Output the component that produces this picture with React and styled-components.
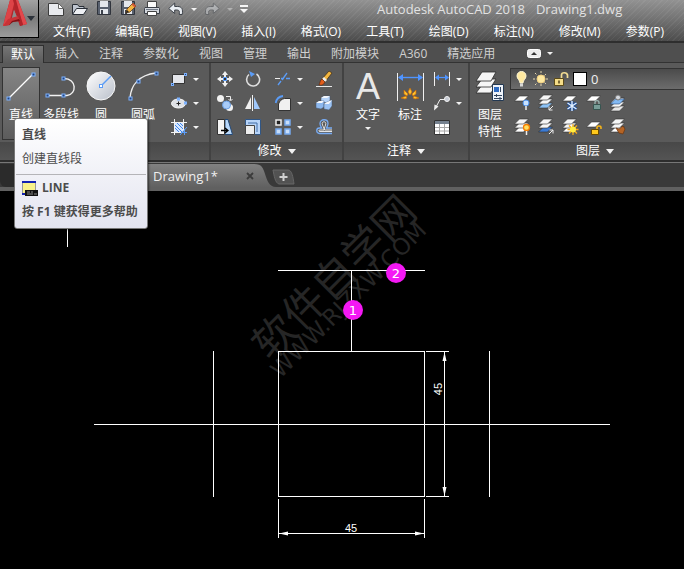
import React from 'react';
import styled, { createGlobalStyle, css } from 'styled-components';

const GlobalStyle = createGlobalStyle`
	* {
		box-sizing: border-box;
	}
	body {
		margin: 0;
		background: #000;
		font-family: "Open Sans", "Noto Sans CJK SC", sans-serif;
		font-size: 12px;
		line-height: 16px;
		color: #f0f0f0;
	}
	button, select {
		font: inherit;
		color: inherit;
		border: 0;
		margin: 0;
		padding: 0;
		background: none;
	}
`;

/* ---------- layout ---------- */

const Window = styled.div`
	display: flex;
	flex-direction: column;
	min-height: 100vh;
	overflow-x: hidden;
`;

const Header = styled.header`
	display: flex;
	height: 43px;
	border-bottom: 2px solid #2e2e2e;
	background:
		repeating-linear-gradient(135deg, rgba(255,255,255,0.05) 0 1px, transparent 1px 4px),
		linear-gradient(#929292, #747474 45%, #4c4c4c);
`;

const LogoButton = styled.button`
	display: flex;
	align-items: center;
	width: 39px;
	height: 38px;
	flex: none;
	padding-left: 3px;
	border: solid #000;
	border-width: 0 1px 1px 0;
	background: linear-gradient(#a2a2a2, #7c7c7c 50%, #9c9c9c);
`;

const HeaderRows = styled.div`
	flex: 1;
	min-width: 0;
	white-space: nowrap;
	overflow: hidden;
`;

const QuickBar = styled.div`
	display: flex;
	align-items: center;
	height: 18px;
	padding-left: 5px;
`;

const QuickButton = styled.button`
	display: flex;
	align-items: center;
	justify-content: center;
	flex: none;
	width: ${props => props.$width || 24}px;
	height: 18px;
	opacity: ${props => (props.disabled ? 0.4 : 1)};
`;

const Title = styled.h1`
	display: flex;
	gap: 11px;
	margin: 0 0 0 125px;
	font-size: 13px;
	font-weight: 400;
	color: #e2e2e2;
`;

const Menu = styled.nav`
	display: flex;
	gap: 25px;
	padding: 6px 0 0 14px;
`;

const MenuLink = styled.a`
	color: #fff;
	text-decoration: none;
`;

const Tabs = styled.div`
	display: flex;
	align-items: stretch;
	height: 20px;
	padding: 2px 0 0 2px;
	white-space: nowrap;
	background: #4f4f4f;
	border-bottom: 1px solid #333;
`;

const Tab = styled.button`
	flex: none;
	padding: 0 10px;
	color: #cfcfcf;
	${props => props.$active && css`
		height: 18px;
		padding: 0 8px;
		margin-right: 1px;
		color: #fff;
		border: 1px solid #2f2f2f;
		border-bottom: 0;
		background: linear-gradient(#757575, #5b5b5b);
	`}
`;

const MinimizeButton = styled.button`
	display: flex;
	align-items: center;
	gap: 6px;
	margin-left: 22px;
`;

const Ribbon = styled.div`
	display: flex;
	height: 99px;
	background: #5a5a5a;
	border-bottom: 2px solid #2d2d2d;
`;

const Panel = styled.section`
	display: flex;
	flex-direction: column;
	flex: ${props => (props.$width ? `0 0 ${props.$width}px` : '1 1 0')};
	min-width: 0;
	border-right: ${props => (props.$clip ? 0 : '2px solid #424242')};
	overflow: ${props => (props.$clip ? 'hidden' : 'visible')};
`;

const PanelBody = styled.div`
	display: flex;
	height: 79px;
	min-width: ${props => props.$minWidth || 0}px;
	padding: 4px 0 0 ${props => props.$left || 0}px;
`;

const PanelTitle = styled.button`
	display: flex;
	align-items: center;
	justify-content: center;
	gap: 6px;
	height: 18px;
	min-width: ${props => props.$minWidth || 0}px;
	color: #fff;
	background: linear-gradient(#484848, #545454);
`;

const BigTool = styled.button`
	display: flex;
	flex-direction: column;
	align-items: center;
	flex: none;
	width: ${props => props.$width}px;
	height: 73px;
	padding-top: 2px;
	color: #fff;
	border: 1px solid transparent;
	${props => props.$active && css`
		border-color: #333;
		background: linear-gradient(#858585, #5c5c5c);
	`}
`;

const BigLabel = styled.span`
	margin: 4px 0;
	line-height: 17px;
	white-space: nowrap;
`;

const ToolSlot = styled.div`
	position: relative;
`;

const ToolGrid = styled.div`
	display: grid;
	grid-template-columns: ${props => props.$columns};
	grid-auto-rows: 24px;
	align-content: start;
	padding-left: ${props => props.$left || 0}px;
`;

const SmallTool = styled.button`
	display: flex;
	align-items: center;
	justify-content: flex-start;
	gap: 6px;
`;

const Caret = styled.i`
	width: 0;
	height: 0;
	border: solid transparent;
	border-width: ${props => (props.$large ? '5px 4px 0' : '3px 3px 0')};
	border-top-color: ${props => props.$color || '#f2f2f2'};
`;

const LayerTools = styled.div`
	flex: 1;
	padding-top: 1px;
`;

const LayerBox = styled.div`
	display: flex;
	align-items: center;
	gap: 4px;
	height: 22px;
	margin-bottom: 1px;
	padding-left: 2px;
	border: 1px solid #333;
	background: linear-gradient(#4b4b4b, #6c6c6c);
`;

const Swatch = styled.span`
	width: 14px;
	height: 14px;
	border: 1px solid #000;
	background: #fff;
`;

const LayerSelect = styled.select`
	flex: 1;
	height: 20px;
	appearance: none;
	font-size: 13px;
`;

const ToolTip = styled.div`
	position: absolute;
	z-index: 2;
	top: 51px;
	left: 12px;
	width: 134px;
	height: 111px;
	border: 1px solid #777;
	border-radius: 3px;
	white-space: nowrap;
	color: #4c4c4c;
	background: linear-gradient(#fff, #e3e4f0);
	box-shadow: 1px 1px 2px rgba(0,0,0,0.5);
`;

const TipText = styled.p`
	display: flex;
	align-items: center;
	gap: 4px;
	margin: 0;
	padding: 0 7px;
	line-height: ${props => props.$line || 24}px;
	font-weight: ${props => (props.$bold ? 700 : 400)};
`;

const TipRule = styled.hr`
	height: 1px;
	margin: 7px 1px 1px;
	border: 0;
	background: #b4b4b8;
`;

const FileTabs = styled.div`
	display: flex;
	align-items: flex-end;
	height: 29px;
	background: #393939;
	border-top: 1px solid #777;
	border-bottom: 4px solid #606060;
`;

const StartTab = styled.button`
	width: 100px;
	height: 23px;
	background: #2b2b2b;
	border-radius: 0 0 6px 6px;
`;

const FileTab = styled.div`
	display: flex;
	align-items: center;
	justify-content: space-between;
	width: 154px;
	height: 23px;
	padding-left: 53px;
	font-size: 13px;
	color: #f0f0f0;
	background: linear-gradient(#818181, #616161);
`;

const CloseButton = styled.button`
	display: flex;
`;

const TabEdge = styled.svg`
	display: block;
	flex: none;
`;

const AddTab = styled.button`
	display: flex;
	margin: 0 0 2px -4px;
`;

const Canvas = styled.main`
	flex: 1;
	background: #000;
`;

const Drawing = styled.svg`
	display: block;
	width: 100%;
	height: 376px;
	font-family: "Liberation Sans", sans-serif;
`;

const Watermark = styled.g`
	fill: #262626;
	font-family: "DejaVu Sans", "Noto Sans CJK SC", sans-serif;
`;

/* ---------- icons ---------- */

const Svg = styled.svg`
	display: block;
	flex: none;
	overflow: visible;
`;

const Icon = ({ w = 16, h = 16, children }) => (
	<Svg width={w} height={h} viewBox={`0 0 ${w} ${h}`} fill="none" aria-hidden="true">{children}</Svg>
);

const Node = ({ x, y, s = 3 }) => (
	<rect x={x - s / 2} y={y - s / 2} width={s} height={s} fill="#24457c" stroke="#7db2ff" />
);

const Sheets = ({ y = 1, low = '#fff', n = 3 }) => (
	<g stroke="#303030" strokeWidth="0.6">
		{[...Array(n).keys()].reverse().map(i => (
			<path key={i} d={`M5.5 ${y + i * 4}h9l-5 5H.5z`} fill={i === n - 1 ? low : '#f6f6f6'} />
		))}
	</g>
);

const Logo = () => (
	<Icon w={24} h={38}>
		<path d="M7 0h8l9 24-7 2-6-16-4 15-7 1z" fill="#b5262b" />
		<path d="M7 0h5l-6 24-6 2z" fill="#dd4347" />
		<path d="M12 0h3l9 24-4 1z" fill="#e2484c" />
		<path d="M10 0h3l7 25-3 1z" fill="#b0242a" />
		<path d="M11 10l3 7-5 2z" fill="#8d8d8d" />
		<path d="M0 26l5-7 10-3 2 5-8 1-3 3z" fill="#c93236" />
		<path d="M6 25l3-4 7-2 1 2-7 1z" fill="#7f1115" />
	</Icon>
);

const NewIcon = () => (
	<Icon>
		<path d="M.5 2.5h10l5 5v7H.5z" fill="#e8eaee" stroke="#3c3c3c" />
		<path d="M10.5 2.5v5h5z" fill="#fff" stroke="#666" />
	</Icon>
);

const OpenIcon = () => (
	<Icon>
		<path d="M.5 13V3.5h5l1.5 2h5v3" fill="#bfc5cf" stroke="#292e36" />
		<path d="M.5 13.5l4-6h11l-4 6z" fill="#eef0f4" stroke="#292e36" />
	</Icon>
);

const SaveIcon = ({ pencil }) => (
	<Icon>
		<path d="M1.5 .5h13v13h-13z" fill="#59616f" stroke="#30343c" />
		<path d="M4 0h8v6H4z" fill="#e4e7ec" />
		<path d="M4 8h8v5H4z" fill="#e4e7ec" />
		<path d="M5 9h2v4H5z" fill="#3c424c" />
		{pencil && (
			<>
				<path d="M6 12l1-4 6-6 3 3-6 6z" fill="#f3b442" stroke="#5b3712" strokeWidth="0.8" />
				<path d="M13 2l3 3-1.5 1.5-3-3z" fill="#d3583a" />
				<path d="M6 12l1-3 2 2z" fill="#222" />
			</>
		)}
	</Icon>
);

const PrintIcon = () => (
	<Icon>
		<path d="M3.5 .5h9v6h-9z" fill="#fafafa" stroke="#444" />
		<path d="M1 6.5h14l.5 1v5H.5v-5z" fill="#d4d8de" stroke="#3a3f48" />
		<path d="M3.5 10.5h9v4h-9z" fill="#fff" stroke="#444" />
		<path d="M2 8.5h12" stroke="#6f7886" />
	</Icon>
);

const UndoIcon = ({ flip }) => (
	<Icon>
		<path
			transform={flip ? 'matrix(-1 0 0 1 16 0)' : undefined}
			d="M.7 7.5l6-5.5v3.5h3c4 0 5.5 2.5 4.5 8h-3c.6-3 0-4.5-2-4.5H6.7v3.5z"
			fill="#e9edf2"
			stroke="#3d4249"
		/>
	</Icon>
);

const CustomizeIcon = () => (
	<Icon w={10} h={10}>
		<path d="M1 1h8v2H1zM1 5h8L5 9z" fill="#f5f5f5" />
	</Icon>
);

const LineIcon = () => (
	<Icon w={32} h={32}>
		<path d="M4 28L28 4" stroke="#fff" strokeWidth="1.3" />
		<Node x={3.5} y={28.5} /><Node x={28.5} y={4.5} />
	</Icon>
);

const PolylineIcon = () => (
	<Icon w={32} h={32}>
		<path d="M2 25.5h20c10-1 10-17-3-17" stroke="#f2f2f2" strokeWidth="1.4" />
		<Node x={2.5} y={25.5} /><Node x={18.5} y={25.5} /><Node x={18.5} y={8.5} />
	</Icon>
);

const CircleIcon = () => (
	<Icon w={32} h={32}>
		<defs>
			<linearGradient id="ball" x2="1" y2="1">
				<stop stopColor="#fff" /><stop offset="1" stopColor="#b9bfca" />
			</linearGradient>
		</defs>
		<circle cx="16" cy="16" r="14" fill="url(#ball)" stroke="#f8f8f8" />
		<path d="M16 16L26 6" stroke="#5b9cf6" strokeWidth="1.5" />
		<rect x="14.5" y="14.5" width="3" height="3" fill="#fff" stroke="#5b9cf6" />
	</Icon>
);

const ArcIcon = () => (
	<Icon w={32} h={32}>
		<path d="M3 28C4 15 12 5 29 3" stroke="#ececec" strokeWidth="1.4" />
		<Node x={3.5} y={28.5} /><Node x={11.5} y={11.5} /><Node x={29.5} y={3.5} />
	</Icon>
);

const RectIcon = () => (
	<Icon>
		<path d="M1.5 3.5h12v9h-12z" fill="#e4e6eb" stroke="#333" />
		<Node x={1.5} y={13.5} s={2} /><Node x={14.5} y={3.5} s={2} />
	</Icon>
);

const EllipseIcon = () => (
	<Icon>
		<ellipse cx="7.5" cy="8.5" rx="7" ry="4.5" fill="#dfe1e6" stroke="#f8f8f8" />
		<path d="M5.500 8.500h4M7.500 6.500v4" stroke="#222" />
		<Node x={7.5} y={4} s={2} /><Node x={14.5} y={8} s={2} />
	</Icon>
);

const HatchIcon = () => (
	<Icon>
		<path d="M0 3.5h16M0 13.5h13M3.5 0v16M12.5 0v12" stroke="#f2f2f2" />
		<path d="M4 4h8v9H4z" fill="#d5e6ff" />
		<path d="M4 9l4 4M4 6l7 7M6 4l6 6M9 4l3 3" stroke="#3f83e6" />
		<path d="M16 8l-7 8M10 13.5h6M13.5 10v6" stroke="#5b9cf6" />
	</Icon>
);

const MoveIcon = () => (
	<Icon>
		<path d="M8 0l3 4H9v2H7V4H5zM8 16l3-4H9v-2H7v2H5zM0 8l4-3v2h2v2H4v2zM16 8l-4-3v2h-2v2h2v2z" fill="#f0f0f0" />
		<rect x="6.5" y="6.5" width="3" height="3" fill="#333" stroke="#5b9cf6" />
	</Icon>
);

const RotateIcon = () => (
	<Icon>
		<path d="M4 3.5a6.5 6.5 0 1 0 7.5-.5" stroke="#dedede" strokeWidth="1.6" />
		<path d="M4 0l6 3-4 3z" fill="#5b9cf6" />
	</Icon>
);

const TrimIcon = () => (
	<Icon>
		<path d="M0 7.5h5" stroke="#eee" />
		<path d="M6 7.5h3M11 7.5h4M3 14l3-4M7 9l5-7" stroke="#5b9cf6" strokeWidth="1.3" />
	</Icon>
);

const EraseIcon = () => (
	<Icon>
		<path d="M0 15.5h16" stroke="#e8e8e8" />
		<path d="M6 8L13 0l3 2-7 9z" fill="#f2b53f" stroke="#3c2a12" strokeWidth="0.7" />
		<path d="M6 8l3 3 2-2-3-3z" fill="#eee" />
		<path d="M6 8l3 3c-2 4-4 3-6 3 1-2 1-5 3-6z" fill="#e35e1c" stroke="#51230e" strokeWidth="0.6" />
	</Icon>
);

const CopyIcon = () => (
	<Icon>
		<circle cx="3.5" cy="3.5" r="3.5" fill="#f2f2f2" />
		<path d="M9 1.5h4.5V5M11.5 4l2 2 2-2" stroke="#eee" />
		<circle cx="12.5" cy="12.5" r="3.5" fill="#f2f2f2" />
		<circle cx="9.5" cy="10" r="4" fill="#a9ccf8" stroke="#6a9fe2" />
	</Icon>
);

const MirrorIcon = () => (
	<Icon>
		<path d="M7.5 0v16" stroke="#f2f2f2" />
		<path d="M6 2v12H0z" fill="#f0f0f0" />
		<path d="M9 2v12h6z" fill="#9fc7fa" />
	</Icon>
);

const FilletIcon = () => (
	<Icon>
		<path d="M3.5 15.5V9c1-3 3-5 6-5.5h6v12z" fill="#f0f0f0" stroke="#333" />
		<path d="M.7 8C1.5 3.5 4 1.5 8 1" stroke="#5b9cf6" strokeWidth="1.8" />
	</Icon>
);

const ExplodeIcon = () => (
	<Icon>
		<path d="M5 3l3-2h6v5l-3 2-6-1z" fill="#b6d4fa" stroke="#44566e" strokeWidth="0.5" />
		<path d="M0 8l3-2h5v6l-3 2-5-1z" fill="#8db8ee" stroke="#44566e" strokeWidth="0.5" />
		<path d="M8 9l3-2 5-2v6l-3 4-5-1z" fill="#9cc3f4" stroke="#44566e" strokeWidth="0.5" />
		<path d="M0 8l3-2h5L6 8zM8 9l3-2 5-2-3 4zM5 3l3-2h6l-3 2z" fill="#f4f7fc" />
	</Icon>
);

const StretchIcon = () => (
	<Icon>
		<path d="M8 .5h3l4.5 15H8z" fill="#b8d8fb" stroke="#244a78" />
		<path d="M.5 .5h7v15h-7z" fill="#f4f4f4" stroke="#333" />
		<path d="M4 11.5h6M8 9l3 2.5L8 14" stroke="#000" strokeWidth="1.3" />
	</Icon>
);

const ScaleIcon = () => (
	<Icon>
		<path d="M.5 .5h15v15H.5z" fill="#b8d4f8" stroke="#315684" />
		<path d="M.5 6.5h9v9h-9z" fill="#eee" stroke="#444" />
		<path d="M3 4h9v9" stroke="#426fa8" />
	</Icon>
);

const ArrayIcon = () => (
	<Icon>
		<path d="M1 1h5v5H1z" fill="#222" stroke="#eee" strokeWidth="1.5" />
		<path d="M10 1h5v5h-5zM1 10h5v5H1zM10 10h5v5h-5z" fill="#c8def9" stroke="#75a9ee" strokeWidth="1.5" />
	</Icon>
);

const OffsetIcon = () => (
	<Icon>
		<path
			d="M16 14.5H3.5C-.2 14.5-.2 9 3.5 9h2.2C5 7.5 4 6.5 4 4.5c0-5 8-5 8 0 0 2-1 3-1.5 4.5H16"
			stroke="#78acf4"
			strokeWidth="1.3"
		/>
		<path
			d="M16 12.5H4c-1.6 0-1.6-1.5 0-1.5h4c.4-3-1.8-4-1.8-6.5 0-2.3 3.6-2.3 3.6 0C9.8 7 8 8 8.5 11H16"
			stroke="#e4e4e4"
		/>
	</Icon>
);

const TextIcon = () => (
	<Icon w={32} h={32}>
		<text x="16" y="29" textAnchor="middle" fontFamily="Liberation Sans" fontSize="36" fill="#e8e8e8">A</text>
	</Icon>
);

const DimIcon = () => (
	<Icon w={30} h={32}>
		<path d="M2.5 3v28M28.5 3v28" stroke="#f0f0f0" />
		<path d="M4 7.5h23" stroke="#4f94ff" strokeWidth="1.4" />
		<path d="M3 7.5L8 4v7zM28 7.5L23 4v7z" fill="#4f94ff" />
		<g fill="#ffc22e" stroke="#c96a08" strokeWidth="0.7">
			<path d="M15 18l2 4-2 3-2-3zM9 20l4 4-1 2-3-2zM21 20l-4 4 1 2 3-2zM6 28l5-2 1 2-2 1zM24 28l-5-2-1 2 2 1z" />
		</g>
	</Icon>
);

const LinearIcon = () => (
	<Icon>
		<path d="M.5 1v14M15.5 1v14" stroke="#f0f0f0" />
		<path d="M2 6.5h12" stroke="#4f94ff" strokeWidth="1.2" />
		<path d="M1 6.5L5 3.5v6zM15 6.5l-4-3v6z" fill="#4f94ff" />
	</Icon>
);

const LeaderIcon = () => (
	<Icon>
		<path d="M1.5 13L6 4.5h5" stroke="#eee" />
		<path d="M0 15.5l.5-6 4 2z" fill="#eee" />
		<circle cx="13" cy="4" r="2.5" fill="#c6cbd4" stroke="#f4f4f4" />
	</Icon>
);

const TableIcon = () => (
	<Icon>
		<path d="M.5 1.5h15v14H.5z" fill="#fff" stroke="#333" />
		<path d="M1 2h14v3H1z" fill="#75818f" />
		<path d="M1 8.5h14M1 12h14M5.5 5v10M10.5 5v10" stroke="#a8a8a8" />
	</Icon>
);

const LayerPropsIcon = () => (
	<Icon w={32} h={32}>
		<g fill="#f6f6f6" stroke="#2c2c2c" strokeWidth="0.8">
			<path d="M8 15h14l-5 8H2z" /><path d="M8 9h14l-5 8H2z" /><path d="M8 2h14l-5 9H2z" />
		</g>
		<path d="M18.5 14.5h11v16h-11z" fill="#eef3fa" stroke="#223852" />
		<path d="M20 17h5v5h-5z" fill="#2f6cc2" />
		<path d="M26.5 17v5M20 25.5h8M20 28.5h8M22.5 24v3M26 27v3" stroke="#33465e" />
	</Icon>
);

const BulbIcon = () => (
	<Icon>
		<path d="M4 5c0-6 9-6 9 0 0 3-3 4-3 7H7c0-3-3-4-3-7z" fill="#ffe9a0" stroke="#fff7d5" />
		<path d="M7 12.5h3v3H7z" fill="#d7d7d7" />
	</Icon>
);

const SunIcon = () => (
	<Icon>
		<path d="M8 0v3M8 13v3M0 8h3M13 8h3M2 2l2.5 2.5M11.5 11.5L14 14M2 14l2.5-2.5M11.5 4.5L14 2" stroke="#e7d9b1" strokeDasharray="2" />
		<circle cx="8" cy="8" r="4" fill="#ffe9a0" stroke="#f0cf80" />
	</Icon>
);

const UnlockIcon = () => (
	<Icon>
		<path d="M8.5 8V4c0-3 5.5-3 6 0v3" stroke="#f3dd93" strokeWidth="1.7" />
		<path d="M1.5 7.5h9v7h-9z" fill="#f6dd88" stroke="#5c4a18" />
		<path d="M6 9.5v3" stroke="#514018" strokeWidth="1.5" />
	</Icon>
);

const LayerIcon = ({ kind }) => (
	<Icon>
		{kind === 'off' && <><Sheets n={1} y={1} /><circle cx="12" cy="8" r="3" fill="#c9e2ff" stroke="#4b91ed" /><path d="M12 11v4" stroke="#eee" strokeWidth="1.5" /></>}
		{kind === 'isolate' && <><Sheets low="#8cc2f5" y={0} /><path d="M15 11l-4 4M11 11.5V15h3.5" stroke="#eee" /></>}
		{kind === 'freeze' && <><Sheets n={1} y={1} /><path d="M10 6v10M5.5 8l9 6M14.5 8l-9 6" stroke="#1e4f9c" strokeWidth="3" /><path d="M10 6v10M5.5 8l9 6M14.5 8l-9 6" stroke="#e4f1ff" strokeWidth="1.4" /></>}
		{kind === 'lock' && <><Sheets n={1} y={1} /><path d="M9 10V7.5c0-2.5 4-2.5 4 0V10" stroke="#9cb7b3" strokeWidth="1.3" /><path d="M7.5 9.5h7v5h-7z" fill="#779c97" stroke="#375550" /></>}
		{kind === 'current' && <><Sheets low="#e8e8e8" y={3} /><path d="M5.5 4h9l-5 5h-9z" fill="#83baf4" stroke="#294c78" strokeWidth="0.6" /><circle cx="8" cy="2.5" r="2.5" fill="#d5d9df" stroke="#777" /></>}
		{kind === 'on' && <><Sheets y={0} /><circle cx="12.5" cy="8.5" r="3" fill="#ffe060" stroke="#f47c00" strokeWidth="1.3" /><path d="M12.5 12v4" stroke="#eee" strokeWidth="1.5" /></>}
		{kind === 'unisolate' && <><Sheets low="#3b7ad3" y={0} /><path d="M11 15l4-4M11.5 11H15v3.5" stroke="#eee" /></>}
		{kind === 'thaw' && <><Sheets y={0} /><path d="M11 5v11M5.5 10.5h11M7 6.5l8 8M15 6.5l-8 8" stroke="#f6a915" strokeWidth="1.3" /><circle cx="11" cy="10.5" r="3" fill="#ffee3f" /></>}
		{kind === 'unlock' && <><Sheets n={1} y={3} /><path d="M11 11V8.5c0-2 4-2 4 0V10" stroke="#f9b617" strokeWidth="1.5" /><path d="M5.5 10.5h7v5h-7z" fill="#ffc91d" stroke="#6a4a00" /></>}
		{kind === 'match' && <><Sheets y={0} /><path d="M6 9l3 1 4-3 2 3-2 5-4-1z" fill="#b56425" stroke="#673410" strokeWidth="0.7" /></>}
	</Icon>
);

const CommandIcon = () => (
	<Icon>
		<path d="M.5 1.5h13v13H.5z" fill="#f8f28a" stroke="#999" />
		<path d="M0 1h14v2H0zM0 13h3v2H0z" fill="#1222b2" />
		<path d="M3 10h13v6H3z" fill="#111" />
		<path d="M5 12h3M9 12h2M5 14h6M12 14h3" stroke="#8b8b8b" />
	</Icon>
);

const CloseIcon = () => (
	<Icon w={8} h={8}>
		<path d="M1 1l6 6M7 1L1 7" stroke="#3b3b3b" strokeWidth="1.8" />
	</Icon>
);

const PlusIcon = () => (
	<Icon w={23} h={16}>
		<path d="M1 1h15c4 0 5 7 6 14H7C3 14 2 6 1 1z" fill="#525252" stroke="#666" />
		<path d="M11.5 4v8M7.5 8h8" stroke="#d0d0d0" strokeWidth="2" />
	</Icon>
);

const PillIcon = () => (
	<Icon w={14} h={9}>
		<rect x="0.5" y="0.5" width="13" height="8" rx="2" fill="#ececec" stroke="#fff" />
		<path d="M4 6l3-3 3 3z" fill="#333" />
	</Icon>
);

/* ---------- data ---------- */

const menus = ['文件(F)', '编辑(E)', '视图(V)', '插入(I)', '格式(O)', '工具(T)', '绘图(D)', '标注(N)', '修改(M)', '参数(P)'];

const tabs = ['默认', '插入', '注释', '参数化', '视图', '管理', '输出', '附加模块', 'A360', '精选应用'];

const drawTools = [
	{ name: '矩形', icon: RectIcon, more: true },
	{ name: '椭圆', icon: EllipseIcon, more: true },
	{ name: '图案填充', icon: HatchIcon, more: true },
];

const modifyTools = [
	{ name: '移动', icon: MoveIcon },
	{ name: '旋转', icon: RotateIcon },
	{ name: '修剪', icon: TrimIcon, more: true },
	{ name: '删除', icon: EraseIcon },
	{ name: '复制', icon: CopyIcon },
	{ name: '镜像', icon: MirrorIcon },
	{ name: '圆角', icon: FilletIcon, more: true },
	{ name: '分解', icon: ExplodeIcon },
	{ name: '拉伸', icon: StretchIcon },
	{ name: '缩放', icon: ScaleIcon },
	{ name: '阵列', icon: ArrayIcon, more: true },
	{ name: '偏移', icon: OffsetIcon },
];

const annotateTools = [
	{ name: '线性', icon: LinearIcon, more: true },
	{ name: '引线', icon: LeaderIcon, more: true },
	{ name: '表格', icon: TableIcon },
];

const layerTools = ['off', 'isolate', 'freeze', 'lock', 'current', 'on', 'unisolate', 'thaw', 'unlock', 'match'];

const marks = [
	{ label: '1', x: 353, y: 119 },
	{ label: '2', x: 396, y: 82 },
];

/* ---------- parts ---------- */

const Tools = ({ items, columns, left }) => (
	<ToolGrid $columns={columns} $left={left}>
		{items.map(({ name, icon: Glyph, more }) => (
			<SmallTool key={name} aria-label={name}>
				<Glyph />
				{more && <Caret />}
			</SmallTool>
		))}
	</ToolGrid>
);

const Big = ({ icon: Glyph, label, width, active, more }) => (
	<BigTool $width={width} $active={active}>
		<Glyph />
		<BigLabel>{label}</BigLabel>
		{more && <Caret />}
	</BigTool>
);

const AppHeader = () => (
	<Header>
		<LogoButton aria-label="应用程序菜单"><Logo /><Caret $large $color="#2c323a" /></LogoButton>
		<HeaderRows>
			<QuickBar>
				<QuickButton aria-label="新建"><NewIcon /></QuickButton>
				<QuickButton aria-label="打开"><OpenIcon /></QuickButton>
				<QuickButton aria-label="保存"><SaveIcon /></QuickButton>
				<QuickButton aria-label="另存为"><SaveIcon pencil /></QuickButton>
				<QuickButton aria-label="打印"><PrintIcon /></QuickButton>
				<QuickButton aria-label="放弃"><UndoIcon /></QuickButton>
				<QuickButton aria-label="放弃列表" $width={12}><Caret /></QuickButton>
				<QuickButton aria-label="重做" disabled><UndoIcon flip /></QuickButton>
				<QuickButton aria-label="重做列表" $width={12} disabled><Caret /></QuickButton>
				<QuickButton aria-label="自定义" $width={16}><CustomizeIcon /></QuickButton>
				<Title><span>Autodesk AutoCAD 2018</span><span>Drawing1.dwg</span></Title>
			</QuickBar>
			<Menu>
				{menus.map(m => <MenuLink key={m} href="#">{m}</MenuLink>)}
			</Menu>
		</HeaderRows>
	</Header>
);

const DrawPanel = () => (
	<Panel $width={211}>
		<PanelBody $left={2}>
			<ToolSlot>
				<Big icon={LineIcon} label="直线" width={38} active />
				<ToolTip role="tooltip">
					<TipText $bold $line={32}>直线</TipText>
					<TipText $line={16}>创建直线段</TipText>
					<TipRule />
					<TipText $bold><CommandIcon />LINE</TipText>
					<TipText $bold>按 F1 键获得更多帮助</TipText>
				</ToolTip>
			</ToolSlot>
			<Big icon={PolylineIcon} label="多段线" width={42} />
			<Big icon={CircleIcon} label="圆" width={38} />
			<Big icon={ArcIcon} label="圆弧" width={46} />
			<Tools items={drawTools} columns="34px" left={5} />
		</PanelBody>
		<PanelTitle>绘图<Caret $large /></PanelTitle>
	</Panel>
);

const ModifyPanel = () => (
	<Panel $width={133}>
		<PanelBody $left={6}>
			<Tools items={modifyTools} columns="28px 30px 41px 18px" />
		</PanelBody>
		<PanelTitle>修改<Caret $large /></PanelTitle>
	</Panel>
);

const AnnotatePanel = () => (
	<Panel $width={126}>
		<PanelBody $left={3}>
			<Big icon={TextIcon} label="文字" width={42} more />
			<Big icon={DimIcon} label="标注" width={42} />
			<Tools items={annotateTools} columns="34px" left={3} />
		</PanelBody>
		<PanelTitle>注释<Caret $large /></PanelTitle>
	</Panel>
);

const LayerPanel = () => (
	<Panel $clip>
		<PanelBody $minWidth={250}>
			<Big icon={LayerPropsIcon} label={<>图层<br />特性</>} width={40} />
			<LayerTools>
				<LayerBox>
					<BulbIcon />
					<SunIcon />
					<UnlockIcon />
					<Swatch />
					<LayerSelect aria-label="图层"><option>0</option></LayerSelect>
				</LayerBox>
				<ToolGrid $columns="repeat(5, 24px)" $left={4}>
					{layerTools.map(kind => (
						<SmallTool key={kind} aria-label={kind}><LayerIcon kind={kind} /></SmallTool>
					))}
				</ToolGrid>
			</LayerTools>
		</PanelBody>
		<PanelTitle $minWidth={250}>图层<Caret $large /></PanelTitle>
	</Panel>
);

const Plan = () => (
	<Drawing aria-label="Drawing1">
		<Watermark transform="translate(276 184) rotate(-45)">
			<text x="5" y="-13" fontSize="42">软件自学网</text>
			<text x="0" y="6" fontSize="23">WWW.RJZXW.COM</text>
		</Watermark>
		<g stroke="#fff" fill="none" shapeRendering="crispEdges">
			<path d="M67.5 0v56M278 79.5h147M351.5 80v80M94 233.5h516M213.5 160v146M489.5 160v146" />
			<path d="M278.5 160.5h146v145h-146z" />
			<path d="M426 160.5h23M426 305.5h23M444.5 161v144" />
			<path d="M278.5 308v39M424.5 308v39M279 342.5h145" />
		</g>
		<path
			d="M444.5 161l2 9h-4zM444.5 305l2-9h-4zM279 342.5l9-2v4zM424 342.5l-9-2v4z"
			fill="#fff"
		/>
		<g fill="#fff" fontSize="11" textAnchor="middle">
			<text x="351" y="341">45</text>
			<text transform="translate(442 198) rotate(-90)">45</text>
		</g>
		{marks.map(m => (
			<g key={m.label} fontSize="13" fontFamily="DejaVu Sans" textAnchor="middle">
				<circle cx={m.x} cy={m.y} r="10" fill="#f418f4" />
				<text x={m.x} y={m.y + 5} fill="#fff">{m.label}</text>
			</g>
		))}
	</Drawing>
);

const App = () => (
	<Window>
		<GlobalStyle />
		<AppHeader />
		<Tabs role="tablist">
			{tabs.map((t, i) => (
				<Tab key={t} role="tab" aria-selected={i === 0} $active={i === 0}>{t}</Tab>
			))}
			<MinimizeButton aria-label="最小化功能区"><PillIcon /><Caret /></MinimizeButton>
		</Tabs>
		<Ribbon>
			<DrawPanel />
			<ModifyPanel />
			<AnnotatePanel />
			<LayerPanel />
		</Ribbon>
		<FileTabs>
			<StartTab aria-label="开始" />
			<FileTab>
				Drawing1*
				<CloseButton aria-label="关闭"><CloseIcon /></CloseButton>
			</FileTab>
			<TabEdge width="22" height="23" aria-hidden="true">
				<defs>
					<linearGradient id="edge" x2="0" y2="1">
						<stop stopColor="#818181" /><stop offset="1" stopColor="#616161" />
					</linearGradient>
				</defs>
				<path d="M0 0c8 0 9 4 11 10s4 13 11 13H0z" fill="url(#edge)" />
			</TabEdge>
			<AddTab aria-label="新图形"><PlusIcon /></AddTab>
		</FileTabs>
		<Canvas><Plan /></Canvas>
	</Window>
);

export default App;
